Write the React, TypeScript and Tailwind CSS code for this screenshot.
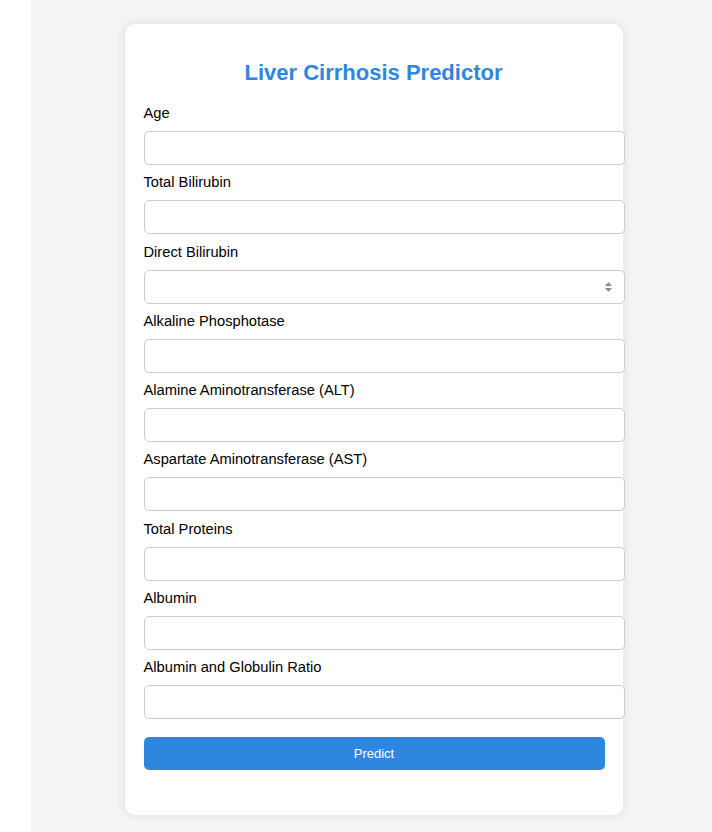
import React from 'react';

const fields = [
  'Age',
  'Total Bilirubin',
  'Direct Bilirubin',
  'Alkaline Phosphotase',
  'Alamine Aminotransferase (ALT)',
  'Aspartate Aminotransferase (AST)',
  'Total Proteins',
  'Albumin',
  'Albumin and Globulin Ratio',
];

const Spinner = () => (
  <svg width="9" height="12" viewBox="0 0 9 12" className="absolute right-[12px] top-[11px]">
    <path d="M4.5 1 L8 5 L1 5 Z" fill="#8a8a8a" />
    <path d="M1 7 L8 7 L4.5 11 Z" fill="#8a8a8a" />
  </svg>
);

export default function App() {
  return (
    <div className="flex min-h-[832px] w-full" style={{ fontFamily: '"Liberation Sans", Arial, sans-serif' }}>
      <div className="w-[31px] shrink-0 bg-white" />
      <div className="flex flex-1 justify-center bg-[#f4f4f4] pt-[24px]">
        <div className="ml-[4px] h-[791px] w-[498px] rounded-[10px] bg-white px-[19px] pt-[20px] shadow-[0_0_10px_rgba(0,0,0,0.1)]">
          <h2 className="mt-[16px] text-center text-[22px] font-bold leading-[26px] text-[#2e86de]">
            Liver Cirrhosis Predictor
          </h2>
          <form className="mt-[18px]" onSubmit={(e) => e.preventDefault()}>
            {fields.map((f) => (
              <div key={f}>
                <label className="mb-[9px] block text-[14.7px] leading-[18px] text-black">{f}</label>
                <div className="relative mb-[8.25px] w-[481px]">
                  <input
                    type="text"
                    className="block h-[34px] w-full rounded-[5px] border border-[#cccccc] bg-white px-[10px] text-[14px] outline-none"
                  />
                  {f === 'Direct Bilirubin' && <Spinner />}
                </div>
              </div>
            ))}
            <button
              type="submit"
              className="mt-[18px] block h-[33px] w-[461px] rounded-[5px] bg-[#2e86de] text-[13px] text-white"
            >
              Predict
            </button>
          </form>
        </div>
      </div>
    </div>
  );
}
